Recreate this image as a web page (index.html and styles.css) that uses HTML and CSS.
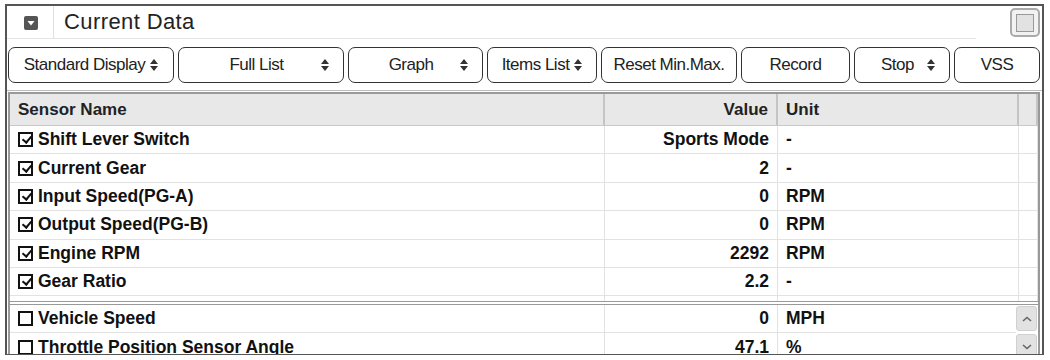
FILE: index.html
```html
<!DOCTYPE html>
<html lang="en">
<head>
    <meta charset="UTF-8">
    <title>Current Data</title>
    <link rel="stylesheet" href="styles.css">
</head>
<body>
    <div class="panel">
        <div class="titlebar">
            <span class="collapse">
                <svg width="14" height="14" viewBox="0 0 14 14"><rect width="14" height="14" rx="2" fill="#555"/><path d="M3.5 5 L10.5 5 L7 9.5 Z" fill="#fff"/></svg>
            </span>
            <span class="title-sep"></span>
            <h1>Current Data</h1>
            <span class="maximize"><span class="maximize-inner"></span></span>
        </div>

        <div class="toolbar">
            <button class="tb w166 select">Standard Display <i class="updown"></i></button>
            <button class="tb w166 select spread"><span>Full List</span> <i class="updown"></i></button>
            <button class="tb w135 select spread"><span>Graph</span> <i class="updown"></i></button>
            <button class="tb w110 select">Items List <i class="updown"></i></button>
            <button class="tb w136">Reset Min.Max.</button>
            <button class="tb w109">Record</button>
            <button class="tb w96 select spread"><span>Stop</span> <i class="updown"></i></button>
            <button class="tb w86">VSS</button>
        </div>

        <div class="grid">
            <div class="fixed">
                <div class="row head">
                    <div class="cell">Sensor Name</div>
                    <div class="cell num">Value</div>
                    <div class="cell">Unit</div>
                    <div class="cell"></div>
                </div>
                <div class="row"><div class="cell"><span class="cb on"></span>Shift Lever Switch</div><div class="cell num">Sports Mode</div><div class="cell">-</div><div class="cell"></div></div>
                <div class="row"><div class="cell"><span class="cb on"></span>Current Gear</div><div class="cell num">2</div><div class="cell">-</div><div class="cell"></div></div>
                <div class="row"><div class="cell"><span class="cb on"></span>Input Speed(PG-A)</div><div class="cell num">0</div><div class="cell">RPM</div><div class="cell"></div></div>
                <div class="row"><div class="cell"><span class="cb on"></span>Output Speed(PG-B)</div><div class="cell num">0</div><div class="cell">RPM</div><div class="cell"></div></div>
                <div class="row"><div class="cell"><span class="cb on"></span>Engine RPM</div><div class="cell num">2292</div><div class="cell">RPM</div><div class="cell"></div></div>
                <div class="row"><div class="cell"><span class="cb on"></span>Gear Ratio</div><div class="cell num">2.2</div><div class="cell">-</div><div class="cell"></div></div>
                <div class="row filler"><div class="cell"></div><div class="cell"></div><div class="cell"></div><div class="cell"></div></div>
            </div>

            <div class="scrolling">
                <div class="rows">
                    <div class="row"><div class="cell"><span class="cb"></span>Vehicle Speed</div><div class="cell num">0</div><div class="cell">MPH</div></div>
                    <div class="row"><div class="cell"><span class="cb"></span>Throttle Position Sensor Angle</div><div class="cell num">47.1</div><div class="cell">%</div></div>
                </div>
                <div class="scrollbar">
                    <span class="sbtn">
                        <svg width="10" height="6" viewBox="0 0 10 6"><path d="M1 5 L5 1.5 L9 5" fill="none" stroke="#666" stroke-width="1.6"/></svg>
                    </span>
                    <span class="sbtn">
                        <svg width="10" height="6" viewBox="0 0 10 6"><path d="M1 1 L5 4.5 L9 1" fill="none" stroke="#666" stroke-width="1.6"/></svg>
                    </span>
                </div>
            </div>
        </div>
    </div>
</body>
</html>
```

FILE: styles.css
```css
* {
    margin: 0;
    padding: 0;
    box-sizing: border-box;
}

body {
    background: #fff;
    font-family: "Liberation Sans", Arial, sans-serif;
    color: #111;
}

.panel {
    margin: 4px 0 0 5px;
    width: 1039px;
    height: 351px;
    border: 2px solid #555;
    border-bottom-width: 1px;
    overflow: hidden;
    display: flex;
    flex-direction: column;
}

/* title */
.titlebar {
    height: 33px;
    flex-shrink: 0;
    display: flex;
    align-items: center;
    border-bottom: 1px solid #e4e4e4;
    margin-right: 66px;
}

.collapse {
    display: flex;
    margin-left: 17px;
    margin-top: 1px;
}

.title-sep {
    width: 1px;
    align-self: stretch;
    background: #e0e0e0;
    margin-left: 15px;
}

.titlebar h1 {
    font-weight: normal;
    font-size: 22px;
    letter-spacing: 0.4px;
    color: #222;
    margin-left: 10px;
    flex: 1;
}

.maximize {
    width: 30px;
    height: 29px;
    border: 2px solid #aaa;
    border-radius: 5px;
    background: #f2f2f2;
    display: flex;
    align-items: center;
    justify-content: center;
    margin-right: -64px;
    margin-top: 1px;
}

.maximize-inner {
    width: 18px;
    height: 18px;
    border: 1.5px solid #999;
    background: #e2e2e2;
}

/* toolbar */
.toolbar {
    display: flex;
    flex-shrink: 0;
    gap: 4px;
    padding: 8px 0 0 1px;
    height: 52px;
    border-bottom: 1px solid #bbb;
}

.tb {
    height: 36px;
    border: 1.5px solid #333;
    border-radius: 7px;
    background: #fff;
    font-family: "Liberation Sans", Arial, sans-serif;
    font-size: 17px;
    letter-spacing: -0.5px;
    color: #222;
    display: flex;
    align-items: center;
    justify-content: center;
    gap: 5px;
    padding: 0 6px;
    white-space: nowrap;
}

.tb.spread span {
    flex: 1;
    text-align: center;
    padding-left: 12px;
}

.tb.spread {
    padding-right: 14px;
}

.w166 { width: 166px; }
.w135 { width: 135px; }
.w110 { width: 110px; }
.w136 { width: 136px; }
.w109 { width: 109px; }
.w96 { width: 96px; }
.w86 { width: 86px; }

.updown {
    width: 8px;
    height: 12px;
    flex-shrink: 0;
    position: relative;
    display: inline-block;
}

.updown::before,
.updown::after {
    content: "";
    position: absolute;
    left: 0;
    border-left: 4px solid transparent;
    border-right: 4px solid transparent;
}

.updown::before {
    top: 0;
    border-bottom: 5px solid #333;
}

.updown::after {
    bottom: 0;
    border-top: 5px solid #333;
}

/* sensor table */
.grid {
    flex: 1;
    margin: 1px 2px 0 1px;
    border: 2px solid #999;
    border-bottom: none;
    display: flex;
    flex-direction: column;
    font-size: 17.5px;
    font-weight: bold;
}

.fixed {
    height: 211px;
    flex-shrink: 0;
    display: flex;
    flex-direction: column;
    border-bottom: 4px double #999;
}

.row {
    display: grid;
    grid-template-columns: 595px 173px 241px 1fr;
    height: 28.4px;
    flex-shrink: 0;
    border-bottom: 1px solid #e2e2e2;
}

.row.head {
    height: 32px;
    background: #e8e8e8;
    border-bottom: 1px solid #c8c8c8;
    font-size: 17px;
    color: #222;
}

.row.head .cell {
    border-right: 2px solid #c4c4c4;
}

.row.filler {
    flex: 1;
    border-bottom: none;
}

.cell {
    display: flex;
    align-items: center;
    padding: 0 8px;
    border-right: 1px solid #e2e2e2;
    white-space: nowrap;
    overflow: hidden;
}

.cell.num {
    justify-content: flex-end;
}

.cb {
    width: 15px;
    height: 15px;
    border: 2px solid #111;
    margin-right: 5px;
    flex-shrink: 0;
    position: relative;
}

.cb.on::after {
    content: "";
    position: absolute;
    left: 3.5px;
    top: 0;
    width: 4px;
    height: 7px;
    border-right: 2.5px solid #111;
    border-bottom: 2.5px solid #111;
    transform: rotate(40deg);
}

.scrolling {
    flex: 1;
    display: flex;
}

.rows {
    flex: 1;
}

.scrolling .row {
    grid-template-columns: 595px 173px 1fr;
}

.scrolling .row .cell:last-child {
    border-right: none;
}

.scrollbar {
    width: 21px;
    display: flex;
    flex-direction: column;
    gap: 3px;
    padding-top: 1px;
    margin-right: 1px;
}

.sbtn {
    height: 25px;
    background: #e2e2e2;
    border: 1px solid #d0d0d0;
    border-radius: 3px;
    display: flex;
    align-items: center;
    justify-content: center;
}
```
